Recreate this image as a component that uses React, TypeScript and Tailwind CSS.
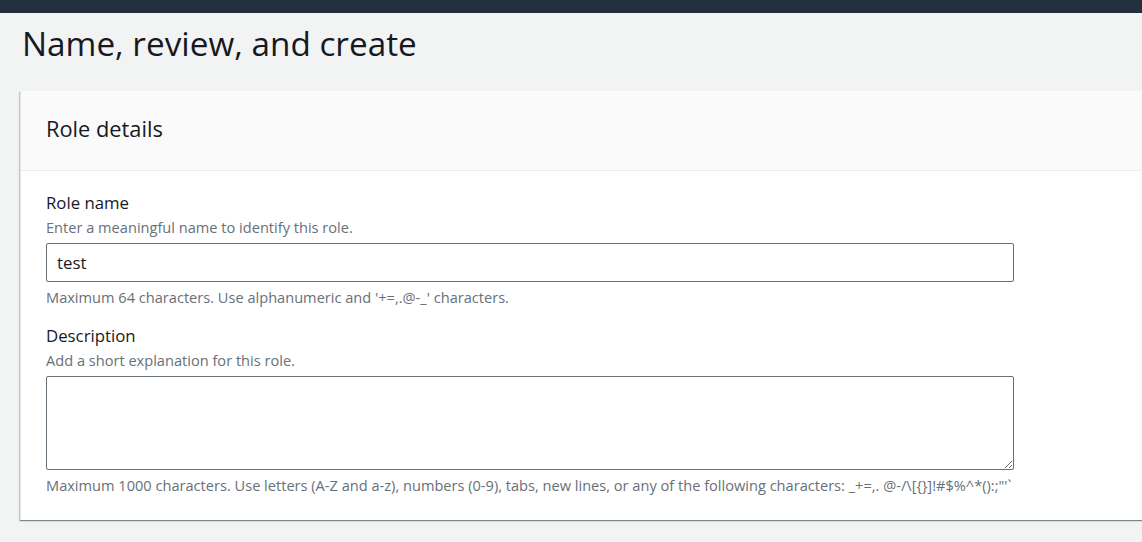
import React from 'react';

const font = { fontFamily: '"Open Sans", "Noto Sans", sans-serif' };

function Field({
    label,
    hint,
    help,
    children,
}: {
    label: string;
    hint: string;
    help: string;
    children: React.ReactNode;
}) {
    return (
        <div className="flex flex-col">
            <div className="text-[16.8px] leading-[24px] text-[#16191f]">{label}</div>
            <div className="mt-[1px] text-[14.6px] leading-[22px] text-[#687078]">{hint}</div>
            <div className="mt-[5px] w-[968px]">{children}</div>
            <div className="mt-[4px] text-[14.6px] leading-[22px] text-[#687078]">{help}</div>
        </div>
    );
}

export default function App() {
    return (
        <div className="min-h-[542px] bg-[#f2f3f3] overflow-hidden" style={font}>
            <div className="h-[13px] bg-[#232f3e]" />
            <h1 className="ml-[22px] mt-[10px] text-[33.3px] leading-[40px] text-[#16191f]">
                Name, review, and create
            </h1>
            <div className="ml-[20px] mt-[28px] bg-white border-l border-[#e4e6e6] shadow-[0_1px_1px_0_rgba(0,28,36,0.3),1px_1px_1px_0_rgba(0,28,36,0.15),-1px_1px_1px_0_rgba(0,28,36,0.15)]">
                <div className="h-[80px] flex items-center pb-[4px] px-[25px] bg-[#fafafa] border-b border-[#eaeded]">
                    <h2 className="text-[21.8px] leading-[28px] text-[#16191f]">Role details</h2>
                </div>
                <div className="px-[25px] pt-[20px] pb-[24px] flex flex-col gap-[16px]">
                    <Field
                        label="Role name"
                        hint="Enter a meaningful name to identify this role."
                        help="Maximum 64 characters. Use alphanumeric and '+=,.@-_' characters."
                    >
                        <input
                            defaultValue="test"
                            className="block w-full h-[39px] px-[10px] text-[16.8px] text-[#16191f] border border-[#687078] rounded-[2px] bg-white outline-none"
                            style={font}
                        />
                    </Field>
                    <Field
                        label="Description"
                        hint="Add a short explanation for this role."
                        help={"Maximum 1000 characters. Use letters (A-Z and a-z), numbers (0-9), tabs, new lines, or any of the following characters: _+=,. @-/\\[{}]!#$%^*():;\"'`"}
                    >
                        <textarea
                            className="block w-full h-[94px] px-[10px] py-[6px] text-[16px] border border-[#687078] rounded-[2px] bg-white outline-none resize-y"
                            style={font}
                        />
                    </Field>
                </div>
            </div>
        </div>
    );
}
